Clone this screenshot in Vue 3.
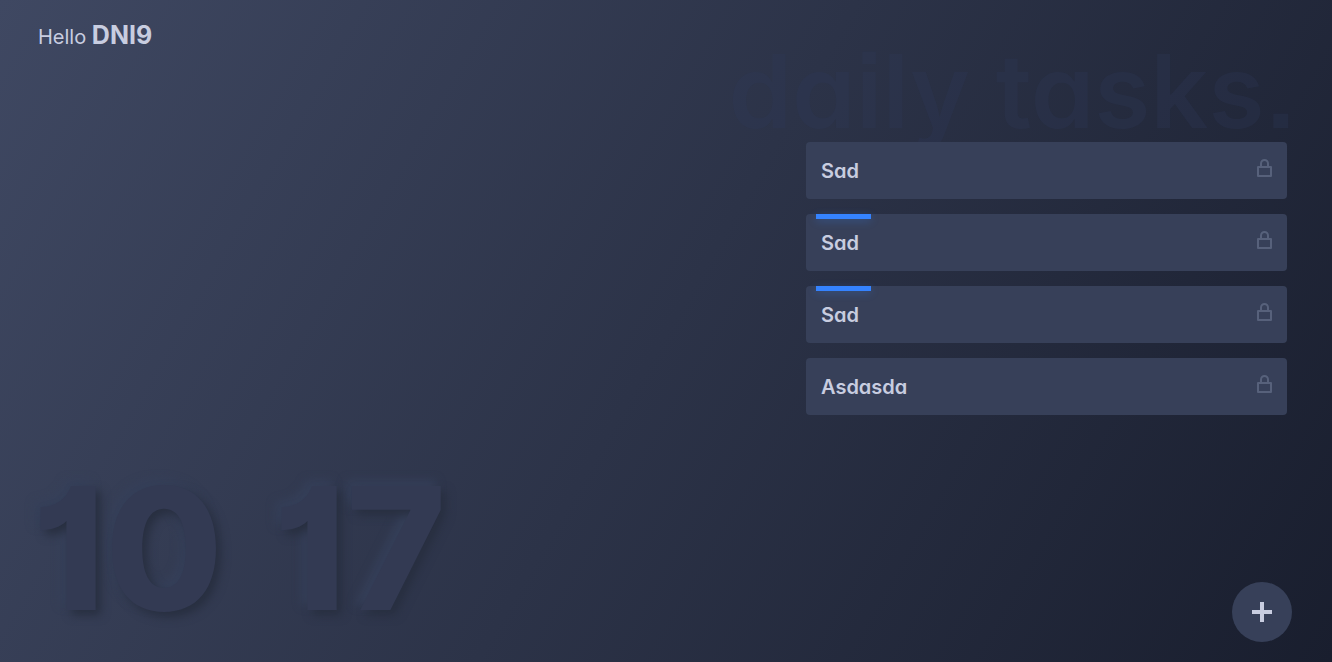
<script setup>
const tasks = [
  { id: 1, title: 'Sad', active: false },
  { id: 2, title: 'Sad', active: true },
  { id: 3, title: 'Sad', active: true },
  { id: 4, title: 'Asdasda', active: false },
]
</script>

<template>
  <div class="page">
    <header class="greeting">Hello <strong>DNI9</strong></header>
    <time class="clock" datetime="10:17"><span>10</span><span>17</span></time>
    <main class="tasks">
      <h1 class="heading">daily tasks.</h1>
      <ul class="list">
        <li v-for="task in tasks" :key="task.id" class="task" :class="{ active: task.active }">
          <span class="title">{{ task.title }}</span>
          <button class="lock" type="button" aria-label="Lock task">
            <svg viewBox="0 0 20 20" width="20" height="20" fill="none" stroke="currentColor" stroke-width="2" stroke-linejoin="round">
              <rect x="4" y="9" width="13" height="9" />
              <path d="M7 9V5.5a3.5 3.5 0 0 1 7 0V9" />
            </svg>
          </button>
        </li>
      </ul>
    </main>
    <button class="add" type="button" aria-label="Add task">
      <svg viewBox="0 0 20 20" width="20" height="20" fill="none" stroke="currentColor" stroke-width="4">
        <path d="M10 0v20M0 10h20" />
      </svg>
    </button>
  </div>
</template>

<style>
body {
  margin: 0;
  background: #1a1f2f;
}
</style>

<style scoped>
.page {
  box-sizing: border-box;
  min-height: 100vh;
  display: grid;
  grid-template-columns: 1fr auto;
  grid-template-rows: auto 1fr auto;
  padding: 20px 40px 20px 38px;
  background: linear-gradient(120deg, #3f4862, #191e2e);
  color: #c8cde0;
  font-family: Inter, "Open Sans", sans-serif;
  font-feature-settings: "cv11";
}
.greeting {
  grid-column: 1;
  grid-row: 1;
  font-size: 20px;
  line-height: 30px;
}
.greeting strong {
  font-size: 25px;
  font-weight: 700;
}
.clock {
  grid-column: 1;
  grid-row: 3;
  display: flex;
  gap: 50px;
  align-self: end;
  margin-left: -6px;
  color: #333a53;
  font-feature-settings: "cv01";
  font-size: 170px;
  font-weight: 800;
  line-height: 188px;
  text-shadow: 5px 5px 10px #282f40, -5px -5px 10px #36405a;
}
.tasks {
  grid-column: 2;
  grid-row: 1 / 3;
  display: flex;
  flex-direction: column;
  align-items: flex-end;
}
.heading {
  margin: 0 -5px 0 0;
  color: rgba(48, 56, 90, 0.28);
  font-feature-settings: "cv11", "ss07";
  font-size: 102px;
  font-weight: 600;
  line-height: 142px;
  height: 122px;
  white-space: nowrap;
}
.list {
  position: relative;
  box-sizing: border-box;
  width: 486px;
  max-width: 100%;
  margin: 0;
  padding: 0 5px 0 0;
  list-style: none;
  display: grid;
  gap: 15px;
}
.task {
  position: relative;
  display: flex;
  align-items: center;
  justify-content: space-between;
  padding: 15px 13px 14px 15px;
  border-radius: 4px;
  background: #374059;
}
.task.active::before {
  content: "";
  position: absolute;
  top: 0;
  left: 10px;
  width: 55px;
  height: 5px;
  background: #3583ff;
  box-shadow: 0 2px 8px rgba(53, 131, 255, 0.3);
}
.title {
  font-size: 20px;
  font-weight: 600;
  line-height: 28px;
}
.lock {
  display: flex;
  align-self: flex-start;
  margin: 0;
  padding: 1px 0 0;
  border: 0;
  background: none;
  color: #57617b;
}
.add {
  grid-column: 2;
  grid-row: 3;
  justify-self: end;
  align-self: end;
  display: flex;
  align-items: center;
  justify-content: center;
  width: 60px;
  height: 60px;
  padding: 0;
  border: 0;
  border-radius: 50%;
  background: #374059;
  color: #c8cde0;
}
</style>
